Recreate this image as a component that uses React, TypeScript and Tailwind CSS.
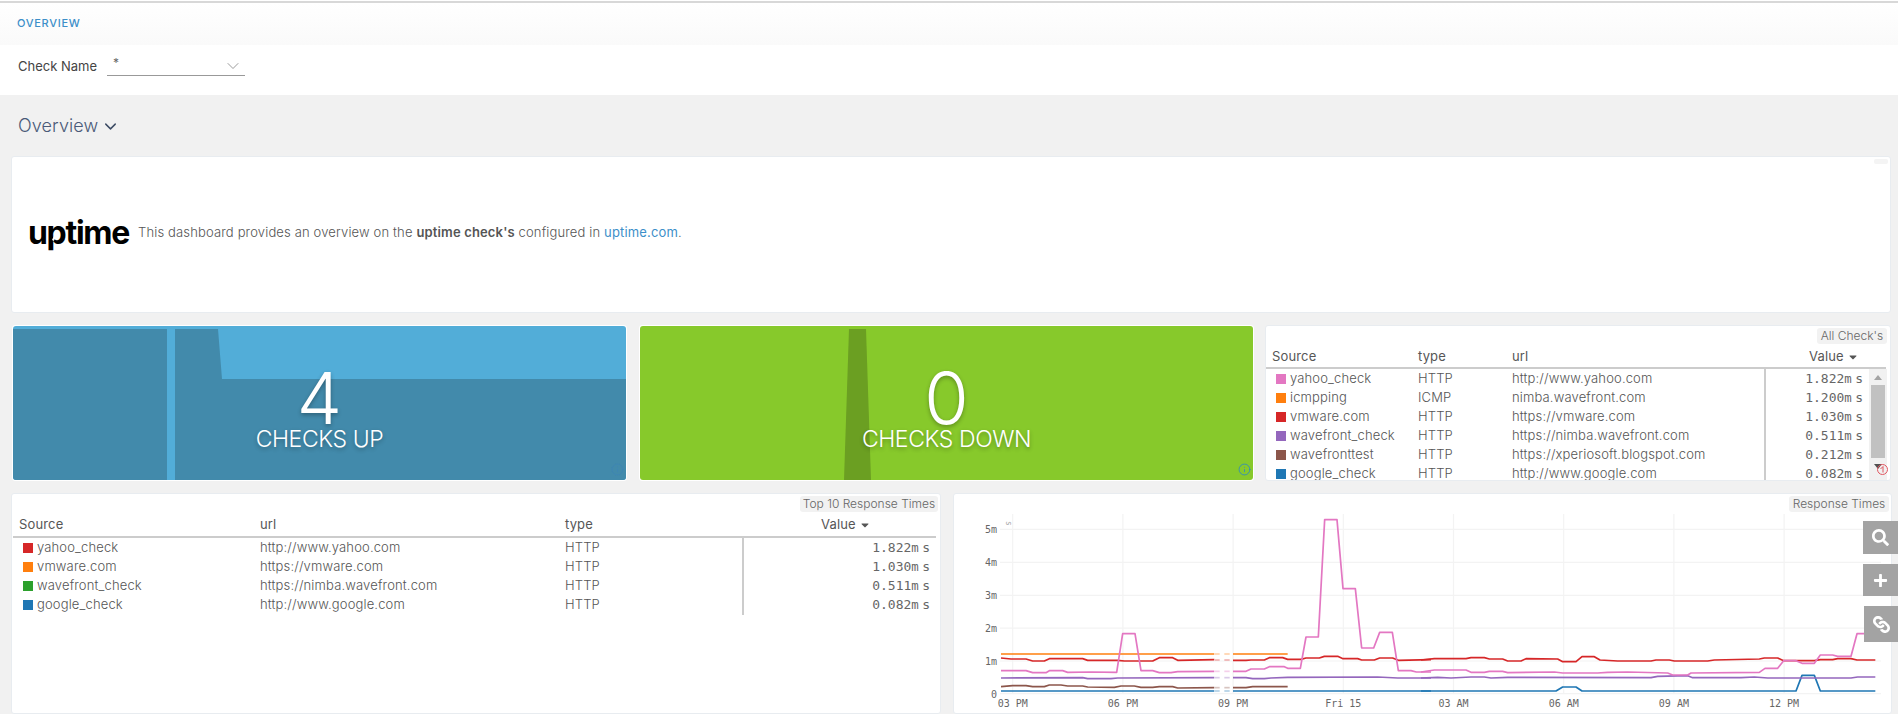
import React from "react";
import { FaSearch, FaPlus, FaLink, FaCaretDown } from "react-icons/fa";
import { ChevronDown, Info } from "lucide-react";

type P = [number, number];
const z6 = (p: P[]) => p.map(([x, y]) => `${950 + x / 3},${485 + y / 3}`).join(" ");
const z7 = (p: P[]) => p.map(([x, y]) => `${1420 + x / 3},${485 + y / 3}`).join(" ");

const series: { color: string; before?: P[]; after: P[]; afterB?: P[]; gapY: number }[] = [
  { color: "#ff7f0e", before: [[150, 507], [790, 507]], after: [[846, 507], [1010, 507]], gapY: 507 },
  { color: "#8c564b", before: [[150, 605], [185, 602], [225, 602], [245, 605], [280, 605], [295, 600], [330, 600], [350, 603], [395, 603], [410, 606], [490, 607], [510, 603], [550, 603], [570, 607], [605, 607], [625, 605], [665, 605], [680, 609], [790, 608]], after: [[846, 608], [885, 608], [905, 605], [1010, 605]], gapY: 608 },
  { color: "#1f77b4", before: [[150, 618], [790, 618]], after: [[846, 618], [1440, 618]], afterB: [[0, 618], [405, 618], [425, 606], [465, 606], [483, 618], [1125, 618], [1143, 571], [1180, 571], [1198, 618], [1363, 618]], gapY: 618 },
  { color: "#9467bd", before: [[150, 579], [395, 578], [410, 581], [480, 581], [500, 579], [790, 578]], after: [[846, 578], [885, 578], [905, 581], [940, 581], [960, 579], [1010, 577], [1280, 576], [1340, 579], [1440, 579]], afterB: [[0, 579], [50, 577], [90, 579], [150, 576], [190, 576], [210, 579], [260, 577], [690, 578], [710, 574], [800, 572], [815, 578], [960, 578], [1000, 576], [1040, 579], [1290, 579], [1310, 576], [1363, 576]], gapY: 578 },
  { color: "#d62728", before: [[150, 519], [180, 522], [225, 522], [245, 528], [280, 528], [295, 521], [395, 521], [410, 526], [500, 526], [520, 528], [605, 528], [625, 518], [665, 518], [680, 526], [790, 524]], after: [[846, 526], [885, 526], [900, 525], [940, 525], [955, 518], [995, 518], [1010, 523], [1050, 523], [1065, 519], [1105, 519], [1120, 514], [1160, 514], [1176, 521], [1220, 521], [1232, 525], [1270, 525], [1286, 519], [1325, 519], [1342, 526], [1440, 524]], afterB: [[0, 525], [40, 521], [135, 521], [150, 518], [190, 518], [205, 522], [245, 522], [260, 528], [300, 528], [315, 521], [410, 522], [425, 530], [465, 530], [483, 515], [520, 515], [537, 525], [590, 528], [690, 528], [705, 525], [745, 525], [760, 528], [860, 528], [880, 525], [1015, 522], [1030, 519], [1070, 519], [1088, 527], [1180, 527], [1198, 524], [1235, 524], [1250, 521], [1290, 521], [1308, 525], [1363, 525]], gapY: 525 },
  { color: "#e377c2", before: [[150, 557], [225, 557], [245, 563], [285, 563], [295, 557], [335, 557], [350, 562], [420, 561], [497, 562], [515, 446], [552, 446], [570, 557], [605, 557], [625, 563], [660, 563], [680, 560], [790, 559]], after: [[846, 559], [885, 559], [900, 552], [940, 552], [955, 545], [1000, 545], [1010, 550], [1048, 550], [1065, 456], [1102, 456], [1121, 104], [1158, 104], [1176, 311], [1213, 311], [1232, 489], [1268, 489], [1286, 442], [1324, 442], [1342, 557], [1380, 557], [1396, 561], [1440, 561]], afterB: [[0, 561], [40, 555], [135, 555], [150, 562], [190, 562], [205, 559], [245, 559], [260, 563], [400, 561], [425, 564], [530, 564], [560, 562], [620, 561], [740, 564], [755, 570], [800, 570], [810, 564], [1015, 562], [1032, 550], [1070, 550], [1088, 527], [1125, 527], [1143, 535], [1180, 535], [1198, 510], [1235, 510], [1250, 514], [1290, 514], [1308, 446], [1363, 446]], gapY: 559 },
];

const xGrid = [
  [1011.7, "03 PM"], [1121.9, "06 PM"], [1232.1, "09 PM"], [1342.3, "Fri 15"],
  [1452.5, "03 AM"], [1562.7, "06 AM"], [1672.9, "09 AM"], [1783.1, "12 PM"],
] as const;
const yGrid = [[529.3, "5m"], [562.3, "4m"], [595.3, "3m"], [628.2, "2m"], [661, "1m"], [693.7, "0"]] as const;

function Chart() {
  return (
    <svg width="937" height="219" viewBox="953 494 937 219" className="block">
      {xGrid.map(([x]) => <line key={x} x1={x} x2={x} y1="514" y2="694" stroke="#f3f3f3" strokeWidth="1.2" />)}
      {yGrid.map(([y]) => <line key={y} x1="999" x2="1880" y1={y} y2={y} stroke="#f3f3f3" strokeWidth="1.2" />)}
      {series.map((s) => (
        <g key={s.color} fill="none" stroke={s.color} strokeWidth="1.7" strokeLinejoin="round">
          {s.before && <polyline points={z6(s.before)} />}
          <polyline points={z6(s.after)} />
          {s.afterB && <polyline points={z7(s.afterB)} />}
          <line x1={950 + 792 / 3} x2={950 + 806 / 3} y1={485 + s.gapY / 3} y2={485 + s.gapY / 3} opacity="0.35" />
          <line x1={950 + 820 / 3} x2={950 + 836 / 3} y1={485 + s.gapY / 3} y2={485 + s.gapY / 3} opacity="0.35" />
        </g>
      ))}
      <g fontFamily="'DejaVu Sans Mono', monospace" fontSize="10" fill="#666">
        {yGrid.map(([y, t]) => <text key={t} x="996" y={y + 4} textAnchor="end">{t}</text>)}
        {xGrid.map(([x, t]) => <text key={t} x={x} y="707" textAnchor="middle">{t}</text>)}
      </g>
      <text x="1005" y="521" fontSize="8" fill="#aaa" transform="rotate(90 1005 521)" fontFamily="'DejaVu Sans Mono', monospace">s</text>
    </svg>
  );
}

const mono = "font-['DejaVu_Sans_Mono',monospace]";

function Val({ v }: { v: string }) {
  return (
    <span className={`${mono} text-[13px] text-[#666]`}>
      {v}<span className="inline-block scale-x-[0.95]">m</span><span className="ml-[3px] inline-block">s</span>
    </span>
  );
}

function Tag({ children, className = "" }: { children: React.ReactNode; className?: string }) {
  return (
    <div className={`h-4 whitespace-nowrap rounded-[3px] bg-[#f2f2f2] text-[12px] font-light leading-4 text-[#666] ${className}`}>
      {children}
    </div>
  );
}

function HeadCell({ children, className = "" }: { children: React.ReactNode; className?: string }) {
  return <div className={`text-[13px] font-normal tracking-[0.15px] text-[#565656] ${className}`}>{children}</div>;
}

function Cell({ children, className = "" }: { children: React.ReactNode; className?: string }) {
  return <div className={`truncate text-[13px] font-light tracking-[0.15px] text-[#555] ${className}`}>{children}</div>;
}

const allChecks = [
  ["#e377c2", "yahoo_check", "HTTP", "http://www.yahoo.com", "1.822"],
  ["#ff7f0e", "icmpping", "ICMP", "nimba.wavefront.com", "1.200"],
  ["#d62728", "vmware.com", "HTTP", "https://vmware.com", "1.030"],
  ["#9467bd", "wavefront_check", "HTTP", "https://nimba.wavefront.com", "0.511"],
  ["#8c564b", "wavefronttest", "HTTP", "https://xperiosoft.blogspot.com", "0.212"],
  ["#1f77b4", "google_check", "HTTP", "http://www.google.com", "0.082"],
];
const top10 = [
  ["#d62728", "yahoo_check", "http://www.yahoo.com", "HTTP", "1.822"],
  ["#ff7f0e", "vmware.com", "https://vmware.com", "HTTP", "1.030"],
  ["#2ca02c", "wavefront_check", "https://nimba.wavefront.com", "HTTP", "0.511"],
  ["#1f77b4", "google_check", "http://www.google.com", "HTTP", "0.082"],
];

function StatCard({ bg, shade, points, num, label, info }: { bg: string; shade: string; points: string; num: string; label: string; info: string }) {
  return (
    <div className={`relative h-full overflow-hidden rounded-[3px] ${bg}`}>
      <svg className="absolute inset-0" width="613" height="154" viewBox="0 0 613 154">
        <polygon points={points} className={shade} />
      </svg>
      <div className="relative flex h-full flex-col items-center pt-[40px] font-['Inter',sans-serif] text-white [text-shadow:0_2px_4px_rgba(0,0,0,0.3)]">
        <div className="h-[62px] text-[72px] font-light leading-[64px]">{num}</div>
        <div className="text-[23px] font-light leading-[22px] tracking-[-0.4px]">{label}</div>
      </div>
      <Info className={`absolute bottom-[4px] right-[2px] ${info}`} size={13} strokeWidth={1.5} />
    </div>
  );
}

export default function App() {
  return (
    <div className="h-[714px] w-[1898px] relative overflow-hidden bg-[#f1f1f1] font-['Inter',sans-serif]">
      <div className="h-[3px] bg-white border-b-2 border-[#d8d8d8]" />
      <div className="flex h-[42px] items-center bg-gradient-to-b from-white to-[#fafafa] pl-[17px] pb-[1px]">
        <span className="text-[11px] font-medium tracking-[0.7px] text-[#3d8fc9]">OVERVIEW</span>
      </div>
      <div className="flex h-[50px] items-start bg-white pl-[18px] pt-[11px]">
        <span className="mt-[1px] text-[13px] text-[#444]">Check Name</span>
        <div className="ml-[10px] flex h-[20px] w-[138px] items-start justify-between border-b border-[#999] pl-[6px] pr-[2px]">
          <span className="text-[12px] leading-[14px] text-[#666]">*</span>
          <ChevronDown className="text-[#888]" size={20} strokeWidth={1} />
        </div>
      </div>
      <div className="flex h-[61px] items-start pl-[18px] pt-[20px]">
        <span className="text-[18px] font-light leading-[22px] tracking-[0.1px] text-[#4a5a78]">Overview</span>
        <ChevronDown className="ml-[3px] mt-[2px] text-[#3b4a63]" size={19} strokeWidth={1.8} />
      </div>

      <div className="ml-[11px] w-[1880px] h-[157px] relative rounded-[3px] border border-[#e8ecf0] bg-white flex items-center pl-[16px] pb-[4px]">
        <div className="absolute right-[2px] top-[2px] h-[5px] w-[14px] rounded-[2px] bg-[#f4f4f4]" />
        <span className="relative w-[110px] font-['Inter',sans-serif] text-[32px] font-bold leading-none tracking-[-1.3px] text-black">
          uptime
          <span className="absolute left-[26px] top-[14px] h-[10px] w-[2px] rotate-[25deg] bg-white" />
        </span>
        <p className="text-[13px] font-light tracking-[0.15px] text-[#555]">
          This dashboard provides an overview on the <b className="font-semibold text-[#555]">uptime check's</b> configured in <span className="font-normal text-[#3d8fc9]">uptime.com</span>.
        </p>
      </div>

      <div className="mt-[12px] ml-[12px] flex h-[156px] gap-[12px]">
        <div className="w-[615px] rounded-[3px] border border-white bg-white">
          <StatCard bg="bg-[#52add8]" shade="fill-[#428aab]" points="0,3 154,3 154,154 162,154 162,3 205,3 209,53 613,53 613,154 0,154" num="4" label="CHECKS UP" info="text-[#3d85b5]" />
        </div>
        <div className="w-[615px] rounded-[3px] border border-white bg-white">
          <StatCard bg="bg-[#87c92b]" shade="fill-[#6b9f22]" points="209,3 226,3 231,154 204,154" num="0" label="CHECKS DOWN" info="text-[#2b87c7]" />
        </div>
        <div className="-ml-[1px] flex w-[626px] flex-col overflow-hidden rounded-[3px] border border-[#e8ecf0] bg-white">
          <div className="flex justify-end pr-[3px] pt-[2px]"><Tag className="w-[70px] text-center">All Check's</Tag></div>
          <div className="mt-[2px] mr-[4px] grid h-[23px] grid-cols-[146px_94px_1fr_130px] items-center border-b-2 border-[#ccc] pl-[6px]">
            <HeadCell>Source</HeadCell>
            <HeadCell>type</HeadCell>
            <HeadCell>url</HeadCell>
            <HeadCell className="flex items-center pl-[53px]">Value<FaCaretDown className="ml-[3px]" size={12} /></HeadCell>
          </div>
          <div className="relative flex min-h-0 flex-1 pr-[3px]">
            <div className="flex-1">
              {allChecks.map((r) => (
                <div key={r[1]} className="grid h-[19px] grid-cols-[146px_94px_252px_1fr] items-center pl-[6px]">
                  <Cell className="flex items-center gap-[4px]"><span className="ml-[4px] h-[10px] w-[10px] shrink-0" style={{ background: r[0] }} />{r[1]}</Cell>
                  <Cell>{r[2]}</Cell>
                  <Cell>{r[3]}</Cell>
                  <div className="flex h-full items-center justify-end border-l-2 border-[#ccc] pr-[6px]"><Val v={r[4]} /></div>
                </div>
              ))}
            </div>
            <div className="flex w-[18px] flex-col items-center bg-[#f1f1f1]">
              <div className="mt-[6px] h-0 w-0 border-x-[4px] border-b-[5px] border-x-transparent border-b-[#a3a3a3]" />
              <div className="mt-[5px] h-[73px] w-[14px] bg-[#c1c1c1]" />
              <div className="mt-[6px] h-0 w-0 border-x-[4px] border-t-[5px] border-x-transparent border-t-[#505050]" />
            </div>
            <svg className="absolute bottom-[4px] right-[1px]" width="13" height="13" viewBox="0 0 13 13" fill="none" stroke="#e0555f" strokeWidth="1">
              <circle cx="6.5" cy="6.5" r="5" />
              <path d="M7 3.5v6M4.5 6 7 3.5" />
            </svg>
          </div>
        </div>
      </div>

      <div className="mt-[12px] ml-[11px] flex h-[221px] gap-[12px]">
        <div className="flex w-[930px] flex-col rounded-[3px] border border-[#e8ecf0] bg-white">
          <div className="flex justify-end pr-[2px] pt-[2px]"><Tag className="w-[138px] text-center">Top 10 Response Times</Tag></div>
          <div className="mr-[4px] ml-[1px] mt-[2px] grid h-[24px] grid-cols-[241px_305px_256px_1fr] items-center border-b-2 border-[#ccc] pl-[6px]">
            <HeadCell>Source</HeadCell>
            <HeadCell>url</HeadCell>
            <HeadCell>type</HeadCell>
            <HeadCell className="flex items-center">Value<FaCaretDown className="ml-[3px]" size={12} /></HeadCell>
          </div>
          <div className="pl-[1px] pr-[4px]">
            {top10.map((r) => (
              <div key={r[1]} className="grid h-[19px] grid-cols-[241px_305px_177px_1fr] items-center pl-[6px]">
                <Cell className="flex items-center gap-[4px]"><span className="ml-[4px] h-[10px] w-[10px] shrink-0" style={{ background: r[0] }} />{r[1]}</Cell>
                <Cell>{r[2]}</Cell>
                <Cell>{r[3]}</Cell>
                <div className="flex h-full items-center justify-end border-l-2 border-[#ccc] pr-[6px]"><Val v={r[4]} /></div>
              </div>
            ))}
          </div>
        </div>
        <div className="relative w-[939px] rounded-[3px] border border-[#e8ecf0] bg-white">
          <div className="absolute right-[2px] top-[2px]"><Tag className="w-[100px] text-center">Response Times</Tag></div>
          <Chart />
        </div>
      </div>

      <div className="absolute right-0 top-[521px] flex h-[33px] w-[35px] items-center justify-center bg-[#a3a3a3] text-white"><FaSearch size={17} /></div>
      <div className="absolute right-0 top-[564px] flex h-[32px] w-[35px] items-center justify-center bg-[#a3a3a3] text-white"><FaPlus size={15} /></div>
      <div className="absolute right-0 top-[606px] flex h-[36px] w-[34px] items-center justify-center bg-[#a3a3a3] text-white"><FaLink className="rotate-90" size={17} /></div>
    </div>
  );
}
